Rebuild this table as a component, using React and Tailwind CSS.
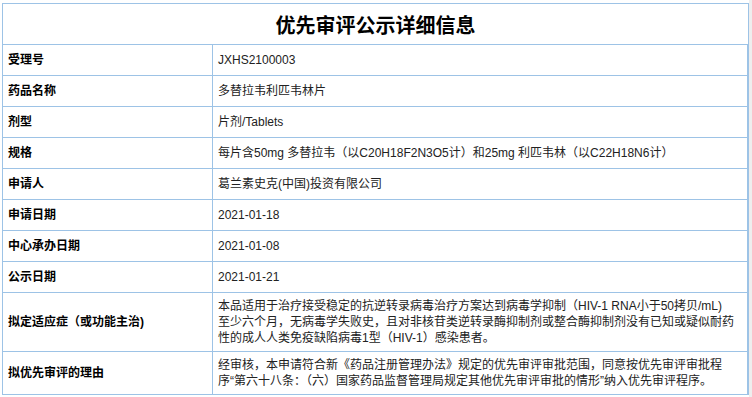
import React from "react";

const font = { fontFamily: '"Liberation Sans", Arial, "Noto Sans CJK SC", sans-serif' };

const single = [
  ["受理号", "JXHS2100003"],
  ["药品名称", "多替拉韦利匹韦林片"],
  ["剂型", "片剂/Tablets"],
  ["规格", "每片含50mg 多替拉韦（以C20H18F2N3O5计）和25mg 利匹韦林（以C22H18N6计）"],
  ["申请人", "葛兰素史克(中国)投资有限公司"],
  ["申请日期", "2021-01-18"],
  ["中心承办日期", "2021-01-08"],
  ["公示日期", "2021-01-21"],
];

const multi = [
  [
    "拟定适应症（或功能主治)",
    [
      "本品适用于治疗接受稳定的抗逆转录病毒治疗方案达到病毒学抑制（HIV-1 RNA小于50拷贝/mL)",
      "至少六个月，无病毒学失败史，且对非核苷类逆转录酶抑制剂或整合酶抑制剂没有已知或疑似耐药",
      "性的成人人类免疫缺陷病毒1型（HIV-1）感染患者。",
    ],
  ],
  [
    "拟优先审评的理由",
    [
      "经审核，本申请符合新《药品注册管理办法》规定的优先审评审批范围，同意按优先审评审批程",
      "序“第六十八条：（六）国家药品监督管理局规定其他优先审评审批的情形”纳入优先审评程序。",
    ],
  ],
];

function Label({ children }) {
  return (
    <div className="w-[210px] shrink-0 border-r border-[#9dc3e6] flex items-center pl-[5px] text-[12px] font-bold text-black">
      {children}
    </div>
  );
}

export default function App() {
  return (
    <div className="w-[752px] h-[397px] bg-white flex overflow-hidden" style={font}>
      <div className="w-[749px] pl-[2px] pt-[3px]">
        <div className="border-l border-t border-r border-[#9dc3e6] w-[747px]">
          <div className="h-[41px] border-b border-[#9dc3e6] flex items-center justify-center pt-[3px] text-[20px] font-bold text-black">
            优先审评公示详细信息
          </div>
          <div className="border-r border-[#9dc3e6]">
            {single.map(([k, v]) => (
              <div key={k} className="flex h-[31px] border-b border-[#9dc3e6]">
                <Label>{k}</Label>
                <div className="flex-1 flex items-center pl-[5px] text-[12px] text-[#222] whitespace-nowrap">
                  {v}
                </div>
              </div>
            ))}
            {multi.map(([k, lines]) => (
              <div key={k} className="flex border-b border-[#9dc3e6]">
                <Label>{k}</Label>
                <div className="flex-1 py-[5px] pl-[5px] text-[12px] leading-[16px] text-[#222]">
                  {lines.map((l, i) => (
                    <div key={i} className="whitespace-nowrap">
                      {l}
                    </div>
                  ))}
                </div>
              </div>
            ))}
          </div>
        </div>
      </div>
      <div className="w-[3px] bg-[#eeeeee]" />
    </div>
  );
}
